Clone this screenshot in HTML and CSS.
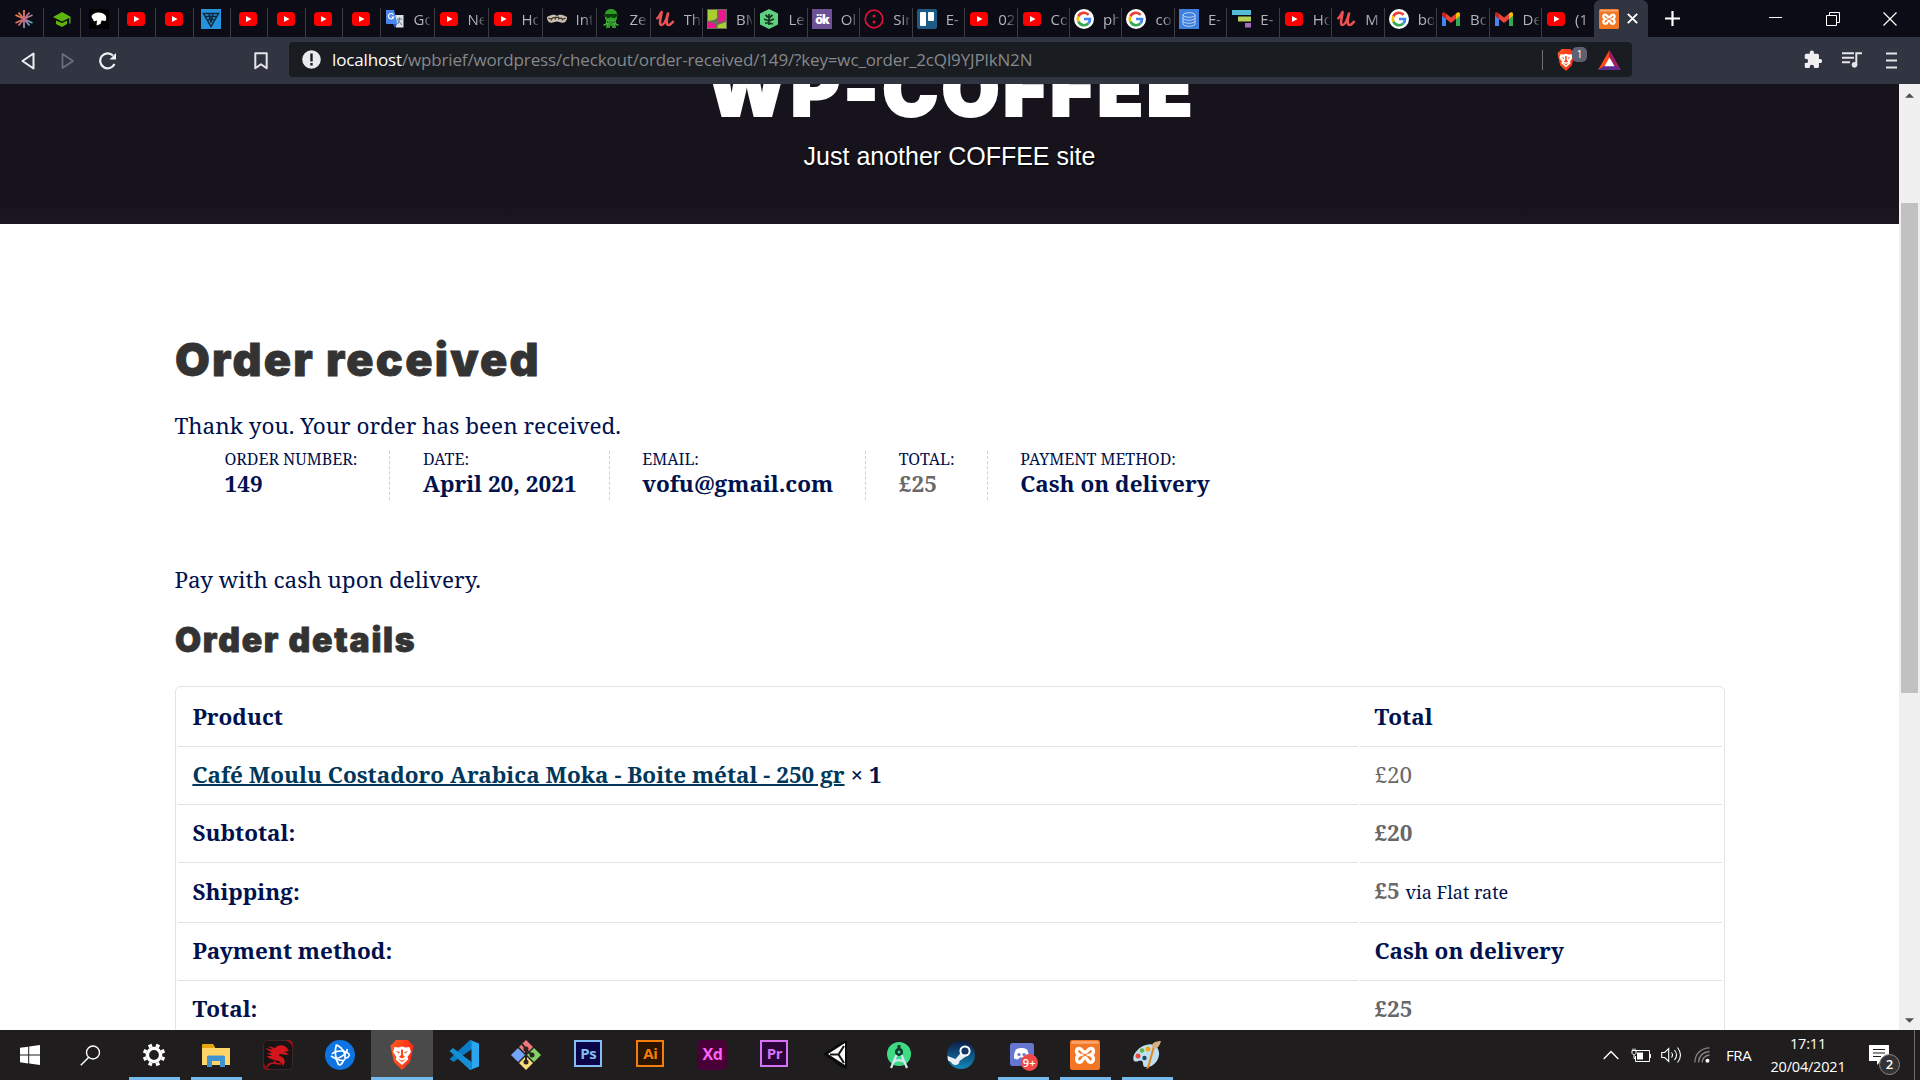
FILE: index.html
```
<!DOCTYPE html>
<html lang="en">
<head>
<meta charset="utf-8">
<title>Checkout – WP-COFFEE</title>
<link rel="stylesheet" href="styles.css">
</head>
<body>
<svg class="sprite" width="0" height="0" aria-hidden="true">
  <defs>
    <linearGradient id="g-star" gradientUnits="userSpaceOnUse" x1="2" x2="18" y1="4" y2="16"><stop offset="0" stop-color="#ff8a2b"/><stop offset=".5" stop-color="#c8677c"/><stop offset="1" stop-color="#3fb6d8"/></linearGradient>
    <linearGradient id="g-steam" x1="0" x2="0" y1="0" y2="1"><stop offset="0" stop-color="#0d1c47"/><stop offset="1" stop-color="#1289b9"/></linearGradient>
    <linearGradient id="g-brave" x1="0" x2="1"><stop offset="0" stop-color="#ff5a1f"/><stop offset="1" stop-color="#fb2b17"/></linearGradient>
    <symbol id="star" viewBox="0 0 20 20"><path d="M10 1v18M1.500 6l17 8M1.500 14l17-8M4.500 3.500l11 13M15.500 3.500l-11 13" stroke="url(#g-star)" stroke-width="1.900" fill="none"/></symbol>
    <symbol id="cap" viewBox="0 0 20 20"><path d="M10 3L1 8l9 4.500L19 8zM4 11.500V15l6 3 5-3v-3.500l-5 2.500zM17.200 9l1.300-.6v6.100h-1.300z" fill="#5fb40a"/></symbol>
    <symbol id="head" viewBox="0 0 20 20"><path d="M0 0h20v20H0z" fill="#000"/><path d="M2.500 8c0-2 2-3.500 4-4 4-1 8 0 10 2.500 1 1.500 1 3.500 0 5.500l-4-.5L11.500 15l-4 1.500L8 11.500l-3 1-1-2z" fill="#fff"/></symbol>
    <symbol id="yt" viewBox="0 0 20 20"><rect x="1" y="3" width="18" height="14" rx="3.500" fill="#f00"/><path d="M8 7l5.500 3L8 13z" fill="#fff"/></symbol>
    <symbol id="vee" viewBox="0 0 20 20"><path d="M0 0h20v20H0z" fill="#2593db"/><path d="M2.500 4.500h15L10 17.500zM5 7.500h10M7 10.500h6M8 4.500l2 9 2-9" fill="none" stroke="#10263c" stroke-width="1.500"/></symbol>
    <symbol id="gt" viewBox="0 0 20 20"><path d="M9 6h9.500v12.500H11z" fill="#dcdfe3"/><path d="M12 10h5M14.500 8.500V10c0 2-1 4-2 5M12.500 11l4.500 5" stroke="#607d8b" fill="none"/><path d="M1 1h8l3.500 14H2a1 1 0 01-1-1z" fill="#4a86ee"/><path d="M8.300 5.600A2.700 2.700 0 108.700 8H6.500" stroke="#fff" stroke-width="1.200" fill="none"/><path d="M8 15h4l-2 4z" fill="#2a56c6"/></symbol>
    <symbol id="mustache" viewBox="0 0 20 20"><path d="M0 8c2-1 3-1.500 4.500-2C7 5.500 8.500 6 10 7c1.500-1 3-1.500 5.500-1C17 6.500 18 7 20 8c.3 2-1 5-3 5.500-3 .8-5-1-7-1s-4 1.800-7 1C1 13-.3 10 0 8z" fill="#c9bfae"/><path d="M1.500 9c3 2.500 5-1.500 8-.5 3-.5 6 3 9 .5M4 11.500l2-3M8 10.500l1-3M12 10.500l-1-3M16 11.500l-2-3" stroke="#3d352c" stroke-width="1.100" fill="none"/></symbol>
    <symbol id="squid" viewBox="0 0 20 20"><path d="M4 5c0-3 3-5 6-5s6 2 6 5v5l-2 2H6l-2-2z" fill="#2f9e26"/><path d="M2.500 5h15v2.500h-2L14 9h-2.500L10 7.500 8.500 9H6L4.500 7.500h-2z" fill="#0c3b0a"/><path d="M6 11c0 4-1 5-3.500 5M8 11v8M12 11v8M14 11c0 4 1 5 3.500 5M10 11v6M5.500 19c1-1 1-3 1-5M14.500 19c-1-1-1-3-1-5" stroke="#3fb833" stroke-width="1.500" fill="none"/></symbol>
    <symbol id="udemy" viewBox="0 0 20 20"><path d="M1.500 10C4.500 8 6 4 6.500 3 7 5 3 16 6.500 16S12 8 13 4.500C12 9 10.500 16 13.500 16c2 0 3.500-2 5-4" stroke="#ec5252" stroke-width="2.600" fill="none" stroke-linejoin="round"/></symbol>
    <symbol id="bm" viewBox="0 0 20 20"><path d="M0 0h20v20H0z" fill="#6b6b5c"/><path d="M1 1h9v8l-3 2-6 1z" fill="#a8cf2f"/><path d="M11.500 1H19v10l-7.500 3z" fill="#ed1690"/><path d="M1 13l8 2v4H1z" fill="#ed1690"/><path d="M10.500 16l8.500-3v6h-8.500z" fill="#a8cf2f"/></symbol>
    <symbol id="treehouse" viewBox="0 0 20 20"><path d="M10 0l9 4.500v11L10 20l-9-4.500v-11z" fill="#5fcf80"/><path d="M10 16V5M10 9L6.500 6M10 12l-5-2M10 14l-4 0M10 9l3.500-3M10 12l5-2M10 14l4 1" fill="none" stroke="#17321f" stroke-width="1.700"/></symbol>
    <symbol id="ok" viewBox="0 0 20 20"><path d="M0 0h20v20H0z" fill="#6c5295"/><text x="10" y="15" text-anchor="middle" font-family="Inter,sans-serif" font-weight="900" font-size="12.500" fill="#fff" letter-spacing="-1">ök</text></symbol>
    <symbol id="smile" viewBox="0 0 20 20"><circle cx="10" cy="10" r="8.800" fill="none" stroke="#e0103a" stroke-width="1.700"/><circle cx="10" cy="7" r="1.500" fill="#e0103a"/><circle cx="10" cy="13" r="1.500" fill="#e0103a"/></symbol>
    <symbol id="trello" viewBox="0 0 20 20"><rect width="20" height="20" rx="2" fill="#1c5c84"/><rect x="3" y="3" width="6" height="14" rx="1" fill="#fff"/><rect x="11" y="3" width="6" height="9" rx="1" fill="#fff"/></symbol>
    <symbol id="google" viewBox="0 0 20 20"><circle cx="10" cy="10" r="10" fill="#fff"/><g fill="none" stroke-width="2.700"><path d="M14.600 5.800A6.200 6.200 0 004.400 7.300" stroke="#ea4335"/><path d="M4.400 7.300a6.200 6.200 0 000 5.400" stroke="#fbbc05"/><path d="M4.400 12.700a6.200 6.200 0 0010 1.700" stroke="#34a853"/><path d="M14.400 14.400A6.200 6.200 0 0016 10h-6" stroke="#4285f4"/></g></symbol>
    <symbol id="db" viewBox="0 0 20 20"><path d="M0 0h20v20H0z" fill="#3d7fdc"/><path d="M4 6c0-3 12-3 12 0v9c0 3-12 3-12 0zM4 6c0 3 12 3 12 0M4 9c0 3 12 3 12 0M4 12c0 3 12 3 12 0" fill="none" stroke="#bcd3f4"/></symbol>
    <symbol id="bars" viewBox="0 0 20 20"><path d="M1 1h19v5H1z" fill="#55bcd8"/><path d="M7 7.500h13v5H7z" fill="#b4cf58"/><path d="M14 14h6v4.500h-6z" fill="#a86cc0"/></symbol>
    <symbol id="gmail" viewBox="0 0 20 20"><path d="M1 5v12h4V8z" fill="#4285f4"/><path d="M19 5v12h-4V8z" fill="#34a853"/><path d="M5 4.500l5 4 5-4V10l-5 4-5-4z" fill="#ea4335"/><path d="M1 5c0-2 2-2.500 4-.5V10L1 7z" fill="#c5221f"/><path d="M19 5c0-2-2-2.500-4-.5V10l4-3z" fill="#fbbc04"/></symbol>
    <symbol id="xampp" viewBox="0 0 20 20"><rect width="20" height="20" rx="1.500" fill="#f37623"/><path d="M1 .8h18v1.700H1z" fill="#f7a873"/><path d="M6.300 5.600C3.800 5.200 3.600 9 6.400 10 3.600 11 3.800 15 6.600 14.800 8.800 14.600 8 11.800 10 11.800s1.200 2.800 3.400 3c2.800.2 3-3.800.2-4.800 2.800-1 2.600-4.800.1-4.400C11.600 6 12 8.200 10 8.200S8.400 6 6.300 5.600z" fill="none" stroke="#fff" stroke-width="2.300"/></symbol>
    <symbol id="brave" viewBox="0 0 24 30"><path d="M6 0h12l3 3.500 2.500 2-1 5.500L20 22l-8 8-8-8L1.500 11l-1-5.500L3 3.500z" fill="url(#g-brave)"/><path d="M4.500 7l4 .5L12 6.500l3.500 1 4-.5 1.500 5-3.500 5 .8 2.500L12 25l-6.300-5.500.8-2.500L3 12z" fill="#fff"/><path d="M6 11l4 1.300-1.500 1.200zM18 11l-4 1.300 1.500 1.200zM11 9.500h2L13 15l2 2-3 1.500L9 17l2-2zM8 19l4 1.500 4-1.500-4 3z" fill="#fb471c"/></symbol>
    <symbol id="gear" viewBox="0 0 24 24"><g fill="none" stroke="#fff"><circle cx="12" cy="12" r="6.600" stroke-width="3.400"/><path stroke-width="3.800" d="M8.900 4.500L7.700 1.600M15.100 4.500l1.200-2.900M19.500 8.900l2.900-1.200M19.500 15.100l2.900 1.200M15.100 19.500l1.200 2.900M8.900 19.500l-1.200 2.900M4.500 15.100l-2.900 1.200M4.500 8.900L1.600 7.700"/></g></symbol>
    <symbol id="folder" viewBox="0 0 28 24"><path d="M0 2a1 1 0 011-1h10l2 3v4H0z" fill="#e5a50f"/><path d="M0 5h28v17H0z" fill="#ffd568"/><path d="M5 24V14a1.500 1.500 0 011.500-1.500h15A1.500 1.500 0 0123 14v10h-5v-6h-8v6z" fill="#3f93d2"/></symbol>
    <symbol id="msi" viewBox="0 0 30 30"><rect x=".5" y=".5" width="29" height="29" rx="4" fill="#171415" stroke="#3a2627"/><path d="M22 0h4c2 0 4 2 4 4v4l-3-5zM0 22v4c0 2 2 4 4 4h4l-5-3z" fill="#8c1118"/><path d="M2 8l8 2-5-4 7 2c4-4 9-3 12 0l2 3-5 1 5 2-3 1-5-1c-2 0-3 1-1 2 5 2 6 6 3 10-1-3-3-5-8-6-4-.5-7-2-8-4l5 0-5-3 5 0z" fill="#d4161c"/><path d="M4 27c2-5 7-4 14-3M11 21l3 3" stroke="#c3141b" stroke-width="1.600" fill="none"/></symbol>
    <symbol id="bnet" viewBox="0 0 30 30"><circle cx="15" cy="15" r="15" fill="#0d74e2"/><g fill="none" stroke="#fff" stroke-width="1.700"><path d="M12 5c6 3 9 9 8 14-1 3-8 1-14-3"/><path d="M7 14c4-4 13-4 17 0 1 2-1 4-4 4"/><path d="M11.500 4.500c-2 6-1 14 2 20 2 1 4-1 5-4"/><path d="M22 9c1 4-6 9-12 10"/></g></symbol>
    <symbol id="vscode" viewBox="0 0 30 30"><path d="M21 0l2 1v8L4.500 22 .5 19z" fill="#0a7dc4"/><path d="M.5 11L4 8l18.500 14v7L21 30z" fill="#168fd6"/><path d="M21 0l9 3.500v23L21 30l1.500-2V2z" fill="#29a6ee"/></symbol>
    <symbol id="git" viewBox="0 0 30 30"><path d="M15 0l7 7-7 7-7-7z" fill="#f2787b"/><path d="M7 8l7 7-7 7-7-7z" fill="#73a6fb"/><path d="M23 8l7 7-7 7-7-7z" fill="#83d266"/><path d="M15 16l7 7-7 7-7-7z" fill="#fbdc78"/><path d="M11 4l4 5v13M15 10l6 5" stroke="#292322" stroke-width="2" fill="none"/><g fill="#292322"><circle cx="15" cy="9" r="2.500"/><circle cx="21" cy="15" r="2.500"/><circle cx="15" cy="22" r="2.500"/></g></symbol>
    <symbol id="unity" viewBox="0 0 30 30"><path d="M1 14L20 2l5-1v28l-6-2z" fill="#0b0b0b"/><path d="M23 3L6 14l17 11z" fill="#fff"/><path d="M8 14.500h8.500M16.500 14.500L22 6M16.500 14.500L22 23" stroke="#1a1a1a" stroke-width="2.200"/></symbol>
    <symbol id="android" viewBox="0 0 30 30"><circle cx="15" cy="14" r="12" fill="#3ddc84"/><circle cx="15" cy="12" r="4" fill="#0d3b2d"/><circle cx="15" cy="12" r="1.500" fill="#3ddc84"/><path d="M13.500 5h3v4h-3z" fill="#0d3b2d"/><path d="M12.500 15L7 28M17.500 15L23 28M9 22c4-2.500 8-2.500 12 0" stroke="#d2e7f2" stroke-width="2.200" fill="none"/></symbol>
    <symbol id="steam" viewBox="0 0 30 30"><circle cx="15" cy="15" r="14" fill="url(#g-steam)"/><path d="M1.500 16l8 3 6-7 5 4-7 5c0 5-7 5-8.500 1l-3-1.500z" fill="#e8eef3"/><circle cx="19" cy="11" r="4.600" fill="#143563" stroke="#fff" stroke-width="2"/></symbol>
    <symbol id="discord" viewBox="0 0 30 30"><rect x="2" y="3" width="24" height="23" rx="2.500" fill="#6675cf"/><path d="M6 18c0-4 .8-6.500 2-8.500 2.500-2 8.500-2 11 0 1.200 2 2 4.500 2 8.500-1.600 1.700-3.500 1.700-4.500 1l-1-1.500h-4l-1 1.500c-1 .7-2.900.7-4.500-1z" fill="#fff"/><circle cx="11" cy="14.500" r="1.600" fill="#6675cf"/><circle cx="16" cy="14.500" r="1.600" fill="#6675cf"/></symbol>
    <symbol id="paint" viewBox="0 0 30 30"><path d="M14 5c8-3 14 3 13 10s-7 13-14 12c-3-1-1-4-3-6s-5 2-8 0C-1 16 6 7 14 5z" fill="#bfe0f2"/><circle cx="6" cy="16" r="2.500" fill="#e5483e"/><circle cx="10" cy="10.500" r="2.300" fill="#63b83e"/><circle cx="16" cy="9" r="2.500" fill="#f2a71e"/><circle cx="12.500" cy="18" r="2.200" fill="#24465f"/><path d="M23 7L17 28l-3 1 2-5 5-18z" fill="#e28a24"/><path d="M20 7c-1-4 4-6 9-6-1 4-3 7-6 8z" fill="#d3b286"/></symbol>
  </defs>
</svg>

<header class="tabstrip">
  <div class="tab mini first"><svg><use href="#star"/></svg></div>
  <div class="tab mini"><svg><use href="#cap"/></svg></div>
  <div class="tab mini"><svg><use href="#head"/></svg></div>
  <div class="tab mini"><svg><use href="#yt"/></svg></div>
  <div class="tab mini"><svg><use href="#yt"/></svg></div>
  <div class="tab mini"><svg><use href="#vee"/></svg></div>
  <div class="tab mini"><svg><use href="#yt"/></svg></div>
  <div class="tab mini"><svg><use href="#yt"/></svg></div>
  <div class="tab mini"><svg><use href="#yt"/></svg></div>
  <div class="tab mini"><svg><use href="#yt"/></svg></div>
  <div class="tab wide"><svg><use href="#gt"/></svg><span>Go</span></div>
  <div class="tab wide"><svg><use href="#yt"/></svg><span>Ne</span></div>
  <div class="tab wide"><svg><use href="#yt"/></svg><span>Ho</span></div>
  <div class="tab wide"><svg><use href="#mustache"/></svg><span>Int</span></div>
  <div class="tab wide"><svg><use href="#squid"/></svg><span>Ze</span></div>
  <div class="tab"><svg><use href="#udemy"/></svg><span>Th</span></div>
  <div class="tab"><svg><use href="#bm"/></svg><span>BM</span></div>
  <div class="tab"><svg><use href="#treehouse"/></svg><span>Le</span></div>
  <div class="tab"><svg><use href="#ok"/></svg><span>Ol</span></div>
  <div class="tab"><svg><use href="#smile"/></svg><span>Sir</span></div>
  <div class="tab"><svg><use href="#trello"/></svg><span>E-</span></div>
  <div class="tab"><svg><use href="#yt"/></svg><span>02</span></div>
  <div class="tab"><svg><use href="#yt"/></svg><span>Co</span></div>
  <div class="tab"><svg><use href="#google"/></svg><span>ph</span></div>
  <div class="tab"><svg><use href="#google"/></svg><span>co</span></div>
  <div class="tab"><svg><use href="#db"/></svg><span>E-</span></div>
  <div class="tab"><svg><use href="#bars"/></svg><span>E-</span></div>
  <div class="tab"><svg><use href="#yt"/></svg><span>Ho</span></div>
  <div class="tab"><svg><use href="#udemy"/></svg><span>M</span></div>
  <div class="tab"><svg><use href="#google"/></svg><span>bo</span></div>
  <div class="tab"><svg><use href="#gmail"/></svg><span>Bo</span></div>
  <div class="tab"><svg><use href="#gmail"/></svg><span>De</span></div>
  <div class="tab last"><svg><use href="#yt"/></svg><span>(1</span></div>
  <div class="tab active"><svg><use href="#xampp"/></svg><svg class="tab-close" viewBox="0 0 11 11"><path d="M.8.800l9.400 9.400M10.200.800L.8 10.200" stroke="#fff" stroke-width="1.900"/></svg></div>
  <svg class="newtab" viewBox="0 0 15 15"><path d="M7.500 0v15M0 7.500h15" stroke="#fff" stroke-width="2.200"/></svg>
  <div class="window-buttons">
    <svg viewBox="0 0 14 14"><path d="M0 5.500h13" stroke="#fff"/></svg>
    <svg viewBox="0 0 14 14"><path d="M.5 3.500h10v10H.5zM3.500 3V.5h10v10H11" fill="none" stroke="#fff"/></svg>
    <svg viewBox="0 0 14 14"><path d="M.5.500l13 13M13.500.500l-13 13" stroke="#fff" stroke-width="1.200"/></svg>
  </div>
</header>

<nav class="toolbar">
  <svg class="back" viewBox="0 0 14 18"><path d="M12.500 1.500v15L1.500 9z" fill="none" stroke="#f0f0f2" stroke-width="2" stroke-linejoin="round"/></svg>
  <svg class="forward" viewBox="0 0 14 18"><path d="M1.500 2v14L12 9z" fill="none" stroke="#6d707b" stroke-width="1.700" stroke-linejoin="round"/></svg>
  <svg class="reload" viewBox="0 0 18 18"><path d="M15.500 12A7.500 7.500 0 1114 3.500" fill="none" stroke="#f0f0f2" stroke-width="2.200"/><path d="M17 1v6.500h-6.500z" fill="#f0f0f2"/></svg>
  <svg class="bookmark" viewBox="0 0 14 18"><path d="M1.300 1.300h11.400v15L7 12.200l-5.700 4.100z" fill="none" stroke="#e6e6e9" stroke-width="2" stroke-linejoin="round"/></svg>
  <div class="address">
    <svg class="info" viewBox="0 0 19 19"><circle cx="9.500" cy="9.500" r="9.300" fill="#e9eaec"/><path d="M8.300 3.500h2.400v8H8.300zM8.300 13h2.400v2.400H8.300z" fill="#191c21"/></svg>
    <div class="url"><b>localhost</b>/wpbrief/wordpress/checkout/order-received/149/?key=wc_order_2cQl9YJPlkN2N</div>
    <i class="divider"></i>
    <div class="shield"><svg><use href="#brave"/></svg><span class="shield-count">1</span></div>
    <svg class="bat" viewBox="0 0 23 20"><path d="M11.500 0L0 20l11.500-7z" fill="#ff4a1c"/><path d="M11.500 0L23 20l-11.500-7z" fill="#9e1f63"/><path d="M0 20h23l-11.500-7.500z" fill="#5b2d91"/><path d="M11.500 7.500l5 8.700h-10z" fill="#fff"/></svg>
  </div>
  <svg class="puzzle" viewBox="0 0 19 19"><path d="M17 9h-1.200V5.200c0-1-.8-1.700-1.700-1.700h-3.600V2.200a2.200 2.200 0 00-4.400 0v1.300H2.500C1.500 3.500.8 4.300.8 5.200v3.500H2a2.300 2.300 0 010 4.600H.8v3.500c0 1 .8 1.700 1.700 1.700H6v-1.200a2.300 2.300 0 014.600 0v1.200h3.500c1 0 1.700-.8 1.700-1.700v-3.500H17A2.150 2.150 0 0017 9z" fill="#f0f0f2"/></svg>
  <svg class="music" viewBox="0 0 20 16"><path d="M0 1.200h12M0 5.700h12M0 10.200h8" stroke="#e6e6e9" stroke-width="2"/><circle cx="12.500" cy="12.700" r="2.800" fill="#e6e6e9"/><path d="M14.300 13V1.200H20" fill="none" stroke="#e6e6e9" stroke-width="2"/></svg>
  <svg class="menu" viewBox="0 0 11 17"><path d="M0 1.500h11M0 8.500h11M0 15.500h11" stroke="#e6e6e9" stroke-width="1.800"/></svg>
</nav>

<div class="viewport">
  <div class="page">
    <section class="hero">
      <div class="site-title">WP-COFFEE</div>
      <p class="tagline">Just another COFFEE site</p>
    </section>
    <main class="order">
      <h1>Order received</h1>
      <p>Thank you. Your order has been received.</p>
      <ul class="overview">
        <li>Order number:<strong>149</strong></li>
        <li>Date:<strong>April 20, 2021</strong></li>
        <li>Email:<strong>vofu@gmail.com</strong></li>
        <li>Total:<strong class="amount">£25</strong></li>
        <li>Payment method:<strong>Cash on delivery</strong></li>
      </ul>
      <p>Pay with cash upon delivery.</p>
      <h2>Order details</h2>
      <table class="details">
        <tr><th>Product</th><th>Total</th></tr>
        <tr><td class="strong"><a>Café Moulu Costadoro Arabica Moka - Boite métal - 250 gr</a> × 1</td><td class="amount">£20</td></tr>
        <tr class="strong"><td>Subtotal:</td><td class="amount">£20</td></tr>
        <tr class="strong shipping"><td>Shipping:</td><td><span class="amount">£5</span> <small>via Flat rate</small></td></tr>
        <tr class="strong"><td>Payment method:</td><td>Cash on delivery</td></tr>
        <tr class="strong"><td>Total:</td><td class="amount">£25</td></tr>
      </table>
    </main>
  </div>
  <div class="scrollbar">
    <svg viewBox="0 0 10 5"><path d="M0 5l5-5 5 5z" fill="#505050"/></svg>
    <div class="track"><div class="thumb"></div></div>
    <svg viewBox="0 0 10 5"><path d="M0 0l5 5 5-5z" fill="#505050"/></svg>
  </div>
</div>

<footer class="taskbar">
  <div class="sys"><svg width="20" height="20" viewBox="0 0 20 20"><path d="M0 2.800L8.200 1.700v7.900H0zM9.200 1.500L20 0v9.600H9.200zM0 10.500h8.200v7.900L0 17.300zM9.200 10.500H20V20L9.200 18.500z" fill="#fff"/></svg></div>
  <div class="sys"><svg width="21" height="21" viewBox="0 0 21 21"><circle cx="13" cy="7.500" r="6.500" fill="none" stroke="#fff" stroke-width="1.400"/><path d="M8.500 12.500L.8 20.200" stroke="#fff" stroke-width="1.500"/></svg></div>
  <div class="apps">
    <div class="app open"><svg class="s24"><use href="#gear"/></svg></div>
    <div class="app open"><svg class="wide-icon"><use href="#folder"/></svg></div>
    <div class="app"><svg><use href="#msi"/></svg></div>
    <div class="app"><svg><use href="#bnet"/></svg></div>
    <div class="app open current"><svg><use href="#brave"/></svg></div>
    <div class="app"><svg><use href="#vscode"/></svg></div>
    <div class="app"><svg><use href="#git"/></svg></div>
    <div class="app"><span class="adobe ps">Ps</span></div>
    <div class="app"><span class="adobe ai">Ai</span></div>
    <div class="app"><span class="adobe xd">Xd</span></div>
    <div class="app"><span class="adobe pr">Pr</span></div>
    <div class="app"><svg><use href="#unity"/></svg></div>
    <div class="app"><svg><use href="#android"/></svg></div>
    <div class="app"><svg><use href="#steam"/></svg></div>
    <div class="app open"><svg><use href="#discord"/></svg><span class="unread">9+</span></div>
    <div class="app open"><svg><use href="#xampp"/></svg></div>
    <div class="app open"><svg><use href="#paint"/></svg></div>
  </div>
  <div class="tray">
    <svg class="chevron" width="16" height="10" viewBox="0 0 16 10"><path d="M.7 9L8 1.500 15.300 9" fill="none" stroke="#fff" stroke-width="1.400"/></svg>
    <svg class="battery" width="20" height="14" viewBox="0 0 20 14"><path d="M5 2.500h13.500v11H4.500V8M19.500 6v4M1 2.500h4v2.500c0 2-4 2-4 0zM2 .500v2M4 .500v2M3 7v3.500h1.500" fill="none" stroke="#fff"/><path d="M6 4.500h6v7H6z" fill="#fff"/></svg>
    <svg class="speaker" width="21" height="18" viewBox="0 0 21 18"><path d="M.7 6.500h3l4-4v13l-4-4h-3zM10.500 6.500q2 2.500 0 5M13.500 4q4 5 0 10M16.500 1.500q6 7.500 0 15" fill="none" stroke="#fff" stroke-width="1.100"/></svg>
    <svg class="wifi" width="16" height="16" viewBox="0 0 16 16"><g fill="none" stroke="#858384" stroke-width="1.300"><path d="M.8 15.500C1 7 7 1 15.500.8"/><path d="M4.500 15.500C5 9 9 5 15.500 4.500"/><path d="M8 15.500C8.500 11 11 8.500 15.500 8"/></g><circle cx="13.500" cy="13.800" r="2" fill="#fff"/></svg>
    <span class="lang">FRA</span>
    <div class="clock"><span>17:11</span><span>20/04/2021</span></div>
    <div class="notify"><svg width="20" height="20" viewBox="0 0 20 20"><path d="M0 0h20v16h-8l-4 4v-4H0z" fill="#fff"/><path d="M4 4.500h12M4 8h12M4 11.500h8" stroke="#1f1c1d" stroke-width="1.200"/></svg><span class="notify-count">2</span></div>
    <i class="peek"></i>
  </div>
</footer>
</body>
</html>
```
FILE: styles.css
```
* { box-sizing: border-box; }
body {
  margin: 0;
  width: 1920px;
  height: 1080px;
  overflow: hidden;
  display: flex;
  flex-direction: column;
  font-family: "Open Sans", "Noto Sans", sans-serif;
}
.sprite { position: absolute; }
svg { display: block; flex: none; }

/* Tab strip */
.tabstrip { display: flex; height: 37px; background: #0b0c16; color: #b3b4ba; }
.tab {
  flex: 0 0 52.45px;
  display: flex;
  align-items: center;
  gap: 9px;
  padding-left: 4px;
  height: 37px;
  font-size: 15px;
  border-right: 1px solid transparent;
  border-image: linear-gradient(transparent 9px, #3b3b40 9px) 1;
}
.tab svg { width: 20px; height: 20px; }
.tab span {
  width: 16px;
  overflow: hidden;
  white-space: nowrap;
  line-height: 20px;
  -webkit-mask-image: linear-gradient(90deg, #000 50%, rgba(0, 0, 0, .25));
  mask-image: linear-gradient(90deg, #000 50%, rgba(0, 0, 0, .25));
}
.tab.mini { flex-basis: 37.4px; padding-left: 7.5px; }
.tab.first { flex-basis: 44px; padding-left: 14px; }
.tab.wide { flex-basis: 54px; }
.tab.last { border-image: none; }
.tab.active {
  flex-basis: 54px;
  padding-left: 5px;
  gap: 8px;
  background: #313441;
  border: 0;
  border-radius: 6px 6px 0 0;
}
.tab .tab-close { width: 11px; height: 11px; }
.newtab { width: 15px; height: 15px; margin: 11px 0 0 17px; }
.window-buttons { display: flex; gap: 43px; margin: 12px 0 0 89px; }
.window-buttons svg { width: 14px; height: 14px; }

/* Toolbar */
.toolbar { display: flex; align-items: center; height: 47px; background: #313441; }
.back { width: 14px; height: 18px; margin-left: 21px; }
.forward { width: 14px; height: 18px; margin-left: 26px; }
.reload { width: 18px; height: 18px; margin-left: 24px; }
.bookmark { width: 14px; height: 18px; margin-left: 137px; }
.address {
  display: flex;
  align-items: center;
  width: 1343px;
  height: 35px;
  margin: 0 0 2px 21px;
  padding-left: 13px;
  border-radius: 4px;
  background: #191c21;
}
.info { width: 19px; height: 19px; }
.url {
  flex: 1;
  margin-left: 11px;
  font-size: 17px;
  letter-spacing: -.15px;
  line-height: 24px;
  color: #85888c;
}
.url b { font-weight: 400; color: #fff; }
.divider { width: 1px; height: 20px; background: #6f7278; }
.shield { position: relative; width: 18px; height: 22px; margin-left: 14px; }
.shield svg { width: 18px; height: 22px; }
.shield-count {
  position: absolute;
  left: 15px;
  top: -2px;
  width: 15px;
  height: 15px;
  border-radius: 5px;
  background: #5e6172;
  color: #fff;
  font-size: 10px;
  line-height: 15px;
  text-align: center;
}
.bat { width: 23px; height: 20px; margin: 0 11px 0 23px; }
.puzzle { width: 18px; height: 19px; margin: 0 0 2px 172px; }
.music { width: 20px; height: 16px; margin: 0 0 2px 20px; }
.menu { width: 11px; height: 17px; margin-left: 24px; }

/* Page area */
.viewport { display: flex; height: 946px; overflow: hidden; background: #fff; }
.page {
  width: 1899px;
  overflow: hidden;
  font: 22.5px/34px "Noto Serif", "DejaVu Serif Condensed", serif;
  color: #00114d;
}
.hero {
  display: flex;
  flex-direction: column;
  justify-content: flex-end;
  align-items: center;
  height: 140px;
  padding-bottom: 53px;
  background: linear-gradient(#17131d 85%, #1b161f);
  color: #fff;
}
.site-title {
  font: 900 75px/80px Inter, sans-serif;
  letter-spacing: 3.3px;
  margin-right: -3px;
  -webkit-text-stroke: 2px #fff;
}
.tagline {
  margin: 12px 0 0;
  font: 25px/30px "Liberation Sans", Arial, sans-serif;
  text-shadow: 1px 1px 2px #000;
}
.order { width: 1550px; margin-left: 175px; padding-top: 109px; }
.order h1, .order h2 {
  margin: 0;
  color: #333;
  font-family: Inter, sans-serif;
  font-weight: 900;
  -webkit-text-stroke: .8px #333;
}
.order h1 { font-size: 45px; line-height: 54px; letter-spacing: 2.2px; margin-bottom: 22px; }
.order h2 { font-size: 33.75px; line-height: 40px; letter-spacing: 1.7px; margin: 23px 0 26px; }
.order p { margin: 0 0 0 -.5px; }
.overview {
  display: flex;
  margin: 8px 0 63px;
  padding: 0 0 0 49.5px;
  list-style: none;
}
.overview li {
  margin-right: 32.65px;
  padding-right: 32px;
  border-right: 1px dashed #d3ced2;
  font-size: 16px;
  line-height: 16px;
  text-transform: uppercase;
}
.overview li:last-child { border: 0; }
.overview strong {
  display: block;
  font-size: 22.5px;
  line-height: 33px;
  text-transform: none;
}
.details {
  width: 1550px;
  table-layout: fixed;
  border: 1px solid #e3e3e3;
  border-radius: 6px;
  border-spacing: 2px;
}
.details th, .details td { height: 56px; padding: 0 14.4px; text-align: left; }
.details th { height: 55px; font-weight: 700; }
.details th:first-child { width: 1180px; }
.details td { border-top: 1px solid #e3e3e3; }
.details .shipping td { height: 58px; }
.details a { color: #00375a; text-decoration: underline; text-decoration-thickness: 2px; }
.details small { font-size: 18px; font-weight: 400; }
.strong { font-weight: 700; }
.amount { color: #686868; }

.scrollbar {
  display: flex;
  flex-direction: column;
  align-items: center;
  width: 21px;
  padding: 9px 0 7px;
  background: #f0f0f0;
}
.scrollbar svg { width: 9px; height: 5px; }
.track { flex: 1; padding-top: 105px; }
.thumb { width: 17px; height: 490px; background: #c1c1c1; }

/* Taskbar */
.taskbar { display: flex; height: 50px; background: #1f1d1e; color: #fff; }
.sys { display: flex; align-items: center; justify-content: center; width: 60px; }
.apps { display: flex; margin-left: 3px; }
.app {
  position: relative;
  display: flex;
  align-items: center;
  justify-content: center;
  width: 62.05px;
  height: 50px;
}
.app svg { width: 30px; height: 30px; }
.app .s24 { width: 24px; height: 24px; }
.app .wide-icon { width: 28px; height: 24px; }
.app.open::after {
  content: "";
  position: absolute;
  left: 6px;
  bottom: 0;
  width: 51px;
  height: 3px;
  background: #76b9ed;
}
.app.current { background: #4b4a4b; }
.app.current::after { left: 0; width: 100%; }
.adobe {
  width: 28px;
  height: 27px;
  margin-bottom: 3px;
  border: 2px solid;
  font-size: 15px;
  font-weight: 700;
  letter-spacing: -.4px;
  line-height: 22px;
  text-align: center;
}
.ps { background: #0c0448; color: #83bdf5; }
.ai { background: #2c1500; color: #f47d0b; }
.pr { background: #2b0438; color: #d475f5; }
.xd { width: 30px; height: 30px; margin: 0; border: 0; border-radius: 5px; font-size: 16px; line-height: 29px; background: #470137; color: #ff61f6; }
.unread {
  position: absolute;
  left: 29px;
  top: 24px;
  width: 17px;
  height: 17px;
  border-radius: 50%;
  background: #f04747;
  font-size: 11px;
  font-weight: 600;
  line-height: 17px;
  text-align: center;
}
.tray { display: flex; align-items: center; margin-left: auto; }
.battery { margin-left: 12px; }
.speaker { margin-left: 10px; }
.wifi { margin-left: 12px; }
.lang { margin-left: 16px; width: 26px; font-size: 15px; letter-spacing: -.4px; }
.clock {
  display: flex;
  flex-direction: column;
  width: 76px;
  margin: 0 0 1px 18px;
  font-size: 14.5px;
  letter-spacing: -.2px;
  line-height: 23px;
  text-align: center;
}
.notify { position: relative; width: 20px; margin-left: 23px; }
.notify-count {
  position: absolute;
  left: 10px;
  top: 9px;
  width: 21px;
  height: 21px;
  border: 1px solid #8b898a;
  border-radius: 50%;
  background: #343233;
  font-size: 13px;
  font-weight: 600;
  line-height: 18px;
  text-align: center;
}
.peek { width: 1px; height: 50px; margin: 0 5px 0 25px; background: #6b696a; }
```
